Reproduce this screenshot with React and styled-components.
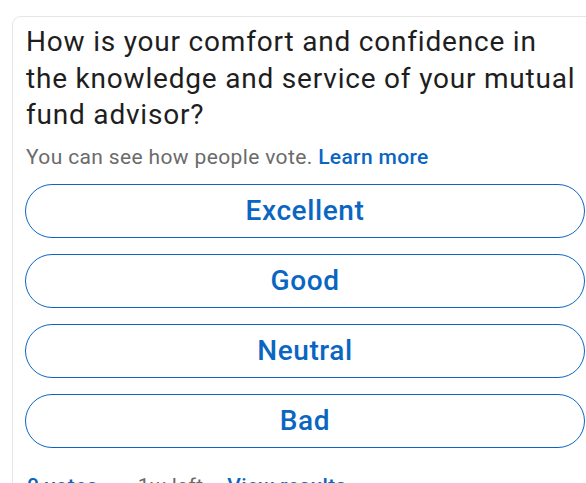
import React from "react";
import styled, { createGlobalStyle } from "styled-components";

const Global = createGlobalStyle`
  html, body {
    margin: 0;
    padding: 0;
    background: #ffffff;
    overflow: hidden;
  }
  body {
    font-family: Roboto, "Noto Sans", Arial, sans-serif;
  }
`;

const Page = styled.div`
  width: 586px;
  height: 483px;
  overflow: hidden;
  padding: 16px 0 0 12px;
  box-sizing: border-box;
`;

const Card = styled.section`
  width: 586px;
  box-sizing: border-box;
  border: 1px solid #e6e6e6;
  border-radius: 9px;
  padding: 7px 12px 16px 12px;
  display: flex;
  flex-direction: column;
`;

const Question = styled.h2`
  margin: 0 0 0 1px;
  font-size: 28px;
  line-height: 36.5px;
  font-weight: 400;
  color: #1e1e1e;
  letter-spacing: 0.8px;
  white-space: nowrap;
`;

const Note = styled.p`
  margin: 9px 0 0 1px;
  font-size: 21px;
  line-height: 28px;
  color: #6b6b6b;
  font-weight: 400;
  letter-spacing: 0.36px;
`;

const Link = styled.a`
  color: #0a66c2;
  font-weight: 500;
  text-decoration: none;
`;

const Options = styled.div`
  display: flex;
  flex-direction: column;
  gap: 16px;
  margin-top: 13px;
`;

const Option = styled.button`
  height: 54px;
  width: 100%;
  box-sizing: border-box;
  border: 1.8px solid #0a66c2;
  border-radius: 28px;
  background: #ffffff;
  color: #0a66c2;
  font-family: Roboto, "Noto Sans", Arial, sans-serif;
  font-size: 28px;
  font-weight: 500;
  letter-spacing: 0.6px;
  display: flex;
  align-items: center;
  justify-content: center;
  padding: 0;
`;

const Footer = styled.div`
  margin: 24px 0 0 2px;
  font-size: 21px;
  line-height: 28px;
  color: #6b6b6b;
  letter-spacing: 0.36px;
  white-space: nowrap;
  display: flex;
  align-items: baseline;
`;

const Sep = styled.span`
  margin: 0 ${(p) => p.$space}px;
`;

const options = ["Excellent", "Good", "Neutral", "Bad"];

export default function App() {
  return (
    <Page>
      <Global />
      <Card>
        <Question>
          How is your comfort and confidence in
          <br />
          the knowledge and service of your mutual
          <br />
          fund advisor?
        </Question>
        <Note>
          You can see how people vote. <Link href="#">Learn more</Link>
        </Note>
        <Options>
          {options.map((o) => (
            <Option key={o}>{o}</Option>
          ))}
        </Options>
        <Footer>
          <Link href="#">0 votes</Link>
          <Sep $space={17}>·</Sep>
          <span>1w left</span>
          <Sep $space={9}>·</Sep>
          <Link href="#">View results</Link>
        </Footer>
      </Card>
    </Page>
  );
}
